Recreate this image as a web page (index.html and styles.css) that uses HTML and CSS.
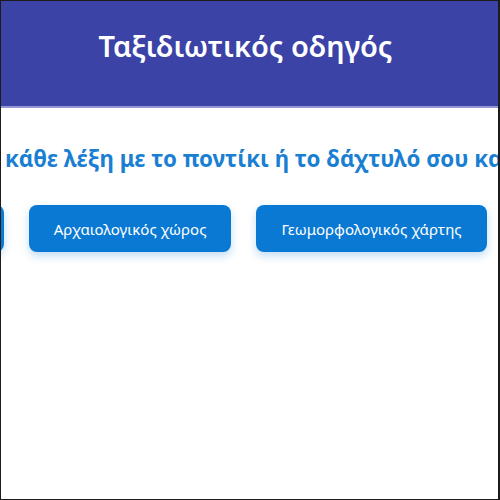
FILE: index.html
```html
<!DOCTYPE html>
<html lang="el">
<head>
  <meta charset="UTF-8">
  <title>Ταξιδιωτικός οδηγός</title>
  <link rel="stylesheet" href="styles.css">
</head>
<body>
  <div class="frame">
    <header class="top">
      <h1>Ταξιδιωτικός οδηγός</h1>
    </header>
    <p class="hint">κάθε λέξη με το ποντίκι ή το δάχτυλό σου και άκουσε</p>
    <div class="menu">
      <button>Μουσεία</button>
      <button>Αρχαιολογικός χώρος</button>
      <button>Γεωμορφολογικός χάρτης</button>
      <button>Παραλίες</button>
    </div>
  </div>
</body>
</html>
```

FILE: styles.css
```css
html, body {
  margin: 0;
  padding: 0;
  background: #fff;
}
.frame {
  box-sizing: border-box;
  width: 500px;
  height: 500px;
  border: 1px solid #1c1c1c;
  border-right-width: 2px;
  overflow: hidden;
  font-family: "Noto Sans", sans-serif;
}
.top {
  box-sizing: border-box;
  height: 107px;
  background-color: #3b43a7;
  border-bottom: 2px solid #9297d6;
  display: flex;
  align-items: center;
  justify-content: center;
  padding: 0 8px 16px 0;
}
.top h1 {
  margin: 0;
  color: #fff;
  font-size: 29px;
  font-weight: 600;
}
.hint {
  margin: 35px 0 0 4px;
  white-space: nowrap;
  color: #1a7fd2;
  font-size: 22.3px;
  font-weight: bold;
}
.menu {
  display: flex;
  gap: 25px;
  margin: 31px 0 0 -109px;
}
.menu button {
  flex: none;
  height: 47px;
  padding: 0 25px;
  border: none;
  border-radius: 8px;
  background-color: #0a79d3;
  color: #fff;
  font-family: inherit;
  font-size: 15px;
  box-shadow: 0 4px 8px rgba(10, 121, 211, 0.25);
}
```
